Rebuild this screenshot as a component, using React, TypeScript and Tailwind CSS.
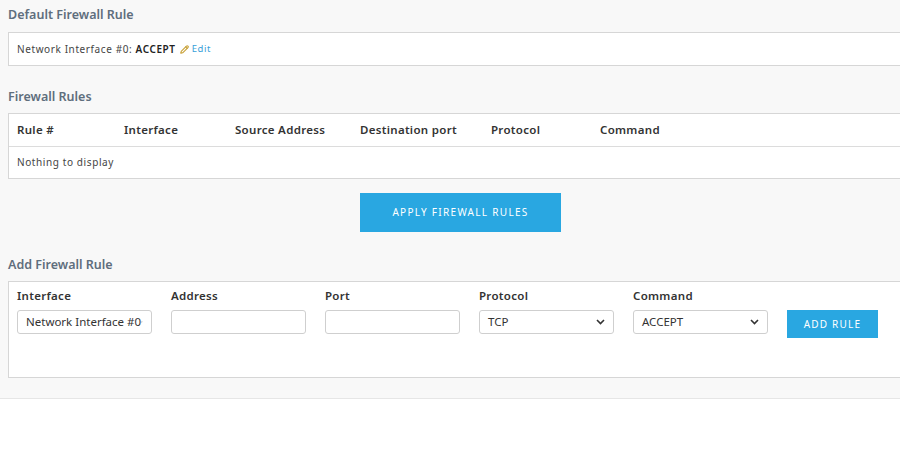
import { Pencil } from "lucide-react";

const cols = [
  { label: "Rule #", w: "w-[107px]" },
  { label: "Interface", w: "w-[111px]" },
  { label: "Source Address", w: "w-[125px]" },
  { label: "Destination port", w: "w-[131px]" },
  { label: "Protocol", w: "w-[109px]" },
  { label: "Command", w: "w-[100px]" },
];

const inputCls =
  "h-[24px] w-[135px] rounded-[3px] border border-[#cfcfcf] bg-white px-2 text-[11.5px] text-[#333] whitespace-nowrap font-['Liberation_Sans',Arial,sans-serif]";

function Select({ value }: { value: string }) {
  return (
    <div className={`${inputCls} flex items-center justify-between`}>
      <span>{value}</span>
      <svg width="9" height="6" viewBox="0 0 9 6">
        <path d="M1 1l3.5 3.5L8 1" stroke="#333" strokeWidth="1.6" fill="none" />
      </svg>
    </div>
  );
}

export default function App() {
  return (
    <div className="w-[900px] h-[450px] bg-white font-['Open_Sans',sans-serif] overflow-hidden">
      <div className="bg-[#f8f8f8] h-[399px] border-b border-[#e6e6e6] pl-2 pt-[7px]">
        <h2 className="text-[12.5px] font-semibold text-[#5f6e7d] h-[16px] leading-[16px]">
          Default Firewall Rule
        </h2>
        <div className="mt-[9px] h-[34px] bg-white border border-r-0 border-[#d6d6d6] flex items-center pl-2 text-[10px] tracking-[0.6px] text-[#444]">
          Network Interface #0:&nbsp;<span className="font-semibold text-[#222]">ACCEPT</span>
          <Pencil className="w-[9px] h-[9px] ml-1 text-[#c9a23a]" strokeWidth={3} />
          <span className="text-[#3aa0d8] text-[9.5px] ml-[3px]">Edit</span>
        </div>

        <h2 className="mt-[23px] text-[12.5px] font-semibold text-[#5f6e7d] h-[16px] leading-[16px]">
          Firewall Rules
        </h2>
        <div className="mt-[8px] bg-white border border-r-0 border-[#d6d6d6]">
          <div className="h-[33px] flex items-center pl-2 border-b border-[#dcdcdc] text-[11.5px] font-semibold text-[#333] tracking-[0.3px]">
            {cols.map((c) => (
              <div key={c.label} className={c.w}>{c.label}</div>
            ))}
          </div>
          <div className="h-[31px] flex items-center pl-2 text-[10px] tracking-[0.6px] text-[#444]">
            Nothing to display
          </div>
        </div>

        <div className="flex mt-[14px] pl-[352px]">
          <button className="w-[201px] h-[39px] bg-[#29a7e1] text-white text-[10px] tracking-[1.3px]">
            APPLY FIREWALL RULES
          </button>
        </div>

        <h2 className="mt-[25px] text-[12.5px] font-semibold text-[#5f6e7d] h-[16px] leading-[16px]">
          Add Firewall Rule
        </h2>
        <div className="mt-[8px] h-[97px] bg-white border border-r-0 border-[#d6d6d6] pl-2 pt-[7px] flex gap-[19px]">
          {[
            { l: "Interface", s: "Network Interface #0" },
            { l: "Address" },
            { l: "Port" },
            { l: "Protocol", s: "TCP" },
            { l: "Command", s: "ACCEPT" },
          ].map((f) => (
            <div key={f.l}>
              <div className="text-[11.5px] font-semibold text-[#333] tracking-[0.3px] h-[14px] leading-[14px] mb-[7px]">
                {f.l}
              </div>
              {f.s ? <Select value={f.s} /> : <div className={inputCls} />}
            </div>
          ))}
          <button className="mt-[21px] w-[91px] h-[28px] bg-[#29a7e1] text-white text-[10px] tracking-[1.2px]">
            ADD RULE
          </button>
        </div>
      </div>
    </div>
  );
}
